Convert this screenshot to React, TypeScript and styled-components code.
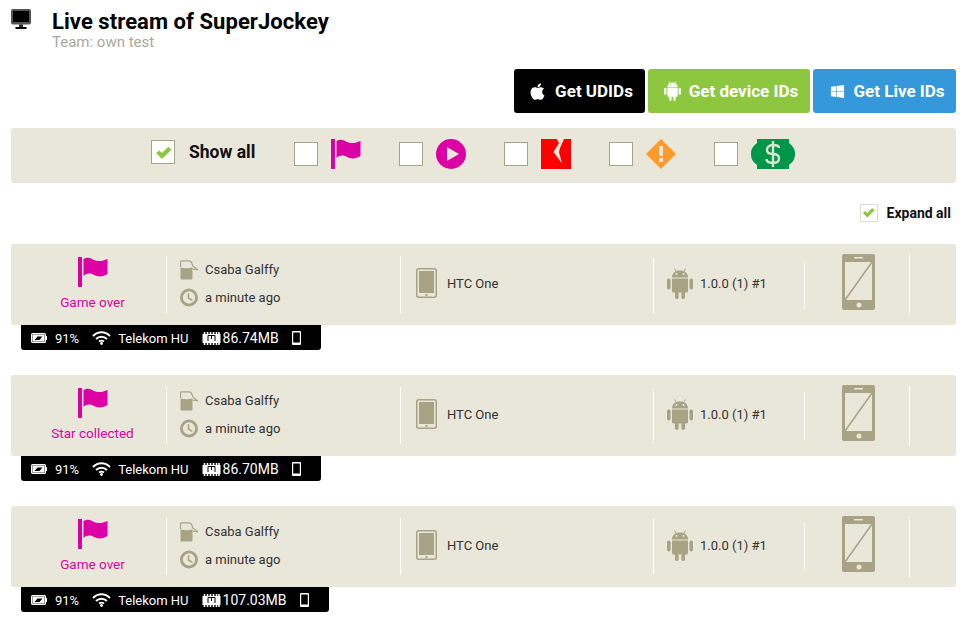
import React, { FunctionComponent } from 'react';
import styled, { createGlobalStyle } from 'styled-components';
import { FaApple, FaWindows } from 'react-icons/fa';

const TAN = '#a9a385';
const SAND = '#e9e6da';
const PINK = '#dc00a4';

const GlobalStyle = createGlobalStyle`
  html, body {
    margin: 0;
    background: #fff;
    font-family: Roboto, "Open Sans", sans-serif;
  }
`;

const Page = styled.div`
  width: 965px;
  height: 626px;
  padding: 0 9px 0 11px;
  box-sizing: border-box;
  overflow: hidden;
`;

const Header = styled.header`
  display: flex;
  height: 69px;
`;

const HeaderIcon = styled.div`
  width: 41px;
  padding-top: 9px;
`;

const Title = styled.h1`
  margin: 9px 0 0;
  font-size: 22px;
  line-height: 25px;
  font-weight: 700;
  letter-spacing: 0.06px;
  color: #000;
`;

const Subtitle = styled.div`
  font-size: 15px;
  line-height: 17px;
  color: #aaa89f;
`;

const ButtonRow = styled.div`
  display: flex;
  justify-content: flex-end;
  gap: 3px;
  height: 44px;
  margin-bottom: 15px;
`;

const GetButton = styled.button<{ $bg: string; $width: number; $pad: number }>`
  display: flex;
  align-items: center;
  justify-content: center;
  gap: 8px;
  width: ${props => props.$width}px;
  padding: 0 0 0 ${props => props.$pad}px;
  border: 0;
  border-radius: 3px;
  background: ${props => props.$bg};
  color: #fff;
  font-family: inherit;
  font-size: 17px;
  font-weight: 700;
`;

const FilterBar = styled.div`
  display: flex;
  align-items: center;
  height: 55px;
  padding-left: 140px;
  border-radius: 3px;
  background: ${SAND};
`;

const ShowAll = styled.label`
  display: flex;
  align-items: center;
  gap: 14px;
  width: 143px;
  margin-top: -7px;
  font-size: 17.5px;
  font-weight: 700;
  color: #111;
`;

const FilterItem = styled.div`
  display: flex;
  align-items: center;
  gap: 13px;
  width: 105px;
  margin-top: -3px;
`;

const CheckBox = styled.span<{ $size?: number; $border?: string }>`
  display: flex;
  align-items: center;
  justify-content: center;
  flex: none;
  width: ${props => props.$size || 24}px;
  height: ${props => props.$size || 24}px;
  box-sizing: border-box;
  border: 1px solid ${props => props.$border || TAN};
  background: #fff;
`;

const ExpandRow = styled.label`
  display: flex;
  align-items: center;
  justify-content: flex-end;
  gap: 9px;
  height: 18px;
  margin: 20px 5px 23px 0;
  padding-top: 1px;
  box-sizing: border-box;
  font-size: 14px;
  font-weight: 700;
  color: #111;
`;

const Entry = styled.section`
  margin-bottom: 25px;
`;

const Card = styled.div`
  display: flex;
  align-items: center;
  height: 81px;
  border-radius: 3px;
  background: ${SAND};
`;

const Cell = styled.div<{ $width: number; $height: number }>`
  display: flex;
  align-items: center;
  flex: none;
  width: ${props => props.$width}px;
  height: ${props => props.$height}px;
  box-sizing: border-box;
  border-right: 1px solid #fff;
`;

const EventCell = styled(Cell)`
  flex-direction: column;
  justify-content: center;
  gap: 7px;
  padding: 0 0 2px 8px;
  color: ${PINK};
  font-size: 13.5px;
  line-height: 16px;
`;

const UserCell = styled(Cell)`
  flex-direction: column;
  align-items: flex-start;
  justify-content: center;
  gap: 8px;
  padding: 0 0 2px 13px;
`;

const UserLine = styled.div`
  display: flex;
  align-items: center;
  gap: 7px;
  height: 20px;
`;

const UserIcon = styled.span`
  display: flex;
  width: 18px;
`;

const InfoCell = styled(Cell)<{ $pad: number; $gap: number }>`
  padding: 0 0 3px ${props => props.$pad}px;
  gap: ${props => props.$gap}px;
`;

const PhoneCell = styled(Cell)`
  justify-content: center;
  padding: 0 0 6px 2px;
`;

const Label = styled.span`
  font-size: 13px;
  color: #333;
`;

const StatusBar = styled.div`
  display: inline-flex;
  align-items: center;
  height: 25px;
  margin-left: 10px;
  padding: 1px 20px 0 10px;
  box-sizing: border-box;
  border-radius: 0 0 3px 3px;
  background: #000;
  color: #fff;
  font-size: 13px;
`;

const StatusText = styled.span<{ $left: number }>`
  margin-left: ${props => props.$left}px;
`;

const MemoryText = styled(StatusText)`
  font-size: 14px;
`;

const StatusGap = styled.span<{ $left: number }>`
  display: flex;
  margin-left: ${props => props.$left}px;
`;

const MonitorIcon = () => (
  <svg width="20" height="20" viewBox="0 0 20 20">
    <rect x="0" y="0" width="20" height="15.5" rx="2" fill="#555" />
    <rect x="2" y="2" width="16" height="11" fill="#000" />
    <rect x="8" y="15.5" width="4" height="2.5" fill="#222" />
    <rect x="4.5" y="18" width="11" height="2" fill="#000" />
  </svg>
);

const CheckMark: FunctionComponent<{ size: number }> = ({ size }) => (
  <svg width={size} height={size} viewBox="0 0 16 16">
    <path d="M1 8.5 L4 6 L6.5 8.5 L12.5 2.5 L15.5 5.5 L6.5 14 Z" fill="#8dc63f" />
  </svg>
);

const FlagIcon = () => (
  <svg width="30" height="30" viewBox="0 0 30 30">
    <rect x="0" y="0" width="4" height="30" fill={PINK} />
    <path d="M5.5 2 C10 -0.5 13 1 16 3 C20 5 25 4 29.5 2 V17 C25 20 20 20 16 18 C12 16 9 16 5.5 19 Z" fill={PINK} />
  </svg>
);

const PlayIcon = () => (
  <svg width="30" height="30" viewBox="0 0 30 30">
    <circle cx="15" cy="15" r="15" fill={PINK} />
    <path d="M11 8 L23 15 L11 22 Z" fill={SAND} />
  </svg>
);

const CrashIcon = () => (
  <svg width="30" height="30" viewBox="0 0 30 30">
    <rect width="30" height="30" fill="#ff0000" />
    <path d="M15.5 0 H23 L19 9 L18 13 L21 24.5 L12.5 13 L18 4 Z" fill={SAND} />
  </svg>
);

const WarningIcon = () => (
  <svg width="30" height="30" viewBox="0 0 30 30">
    <path d="M15 0 L30 15 L15 30 L0 15 Z" fill="#ff9a2b" />
    <rect x="13" y="7" width="4" height="10" fill={SAND} />
    <rect x="13" y="19" width="4" height="4" fill={SAND} />
  </svg>
);

const DollarIcon = () => (
  <svg width="44" height="30" viewBox="0 0 44 30">
    <path d="M6 0 H38 V4 C40 6 44 8 44 15 C44 22 40 24 38 26 V30 H6 V26 C4 24 0 22 0 15 C0 8 4 6 6 4 Z" fill="#00964a" />
    <path d="M28 9 C28 7 26 6 22 6 C18 6 16 8 16 11 C16 14 18 15 22 15 C26 15 28 16 28 19.5 C28 22 26 24 22 24 C18 24 15.5 23 15.5 20 M22 2 V28" fill="none" stroke="#d9e6d0" strokeWidth="2.4" />
  </svg>
);

const AndroidIcon: FunctionComponent<{ width?: number; height?: number; color?: string; eyes?: string }> = ({
  width = 26,
  height = 31,
  color = TAN,
  eyes = SAND
}) => (
  <svg width={width} height={height} viewBox="0 0 26 31">
    <path d="M5 9.5 C5 5 8.5 2.5 13 2.5 C17.5 2.5 21 5 21 9.5 Z" fill={color} />
    <path d="M7.5 0.5 L9.5 4 M18.5 0.5 L16.5 4" stroke={color} strokeWidth="1" />
    <circle cx="9.5" cy="6" r="1" fill={eyes} />
    <circle cx="16.5" cy="6" r="1" fill={eyes} />
    <path d="M5 10.5 H21 V23 C21 24 20 24.5 19 24.5 H7 C6 24.5 5 24 5 23 Z" fill={color} />
    <rect x="0" y="10.5" width="3.6" height="11" rx="1.8" fill={color} />
    <rect x="22.4" y="10.5" width="3.6" height="11" rx="1.8" fill={color} />
    <rect x="8" y="22" width="3.6" height="9" rx="1.8" fill={color} />
    <rect x="14.4" y="22" width="3.6" height="9" rx="1.8" fill={color} />
  </svg>
);

const CupIcon = () => (
  <svg width="18" height="20" viewBox="0 0 18 20">
    <path d="M0.5 7.5 C4 8.5 9 8.5 12.5 7.5 V18 C12.5 19 12 19.5 11 19.5 H2 C1 19.5 0.5 19 0.5 18 Z" fill={TAN} />
    <path d="M0.5 7 V2 C0.5 1.2 1 0.8 2 0.8 H9 C10.5 0.8 11.5 2 12 3.5 L12.8 6 L18 10 L12.5 9" fill="none" stroke={TAN} strokeWidth="1.2" />
  </svg>
);

const ClockIcon = () => (
  <svg width="19" height="19" viewBox="0 0 19 19">
    <circle cx="9.5" cy="9.5" r="8" fill="none" stroke={TAN} strokeWidth="3" />
    <path d="M9 5 V10 L13 12.5" fill="none" stroke={TAN} strokeWidth="1.6" />
  </svg>
);

const TabletIcon = () => (
  <svg width="21" height="30" viewBox="0 0 21 30">
    <rect x="0.75" y="0.75" width="19.5" height="28.5" rx="2" fill="none" stroke={TAN} strokeWidth="1.5" />
    <rect x="3" y="3" width="15" height="22" fill={TAN} />
    <rect x="9.5" y="26" width="2" height="2" fill={TAN} />
  </svg>
);

const PhoneIcon = () => (
  <svg width="33" height="56" viewBox="0 0 33 56">
    <rect width="33" height="56" rx="2" fill={TAN} />
    <rect x="3" y="8" width="27" height="38" fill={SAND} />
    <path d="M3 46 L30 8" stroke={TAN} strokeWidth="1.5" />
    <rect x="12" y="3" width="9" height="1.5" fill={SAND} />
    <circle cx="17" cy="51" r="2.5" fill={SAND} />
  </svg>
);

const BatteryIcon = () => (
  <svg width="16" height="10" viewBox="0 0 16 10">
    <rect x="0.6" y="0.6" width="13.8" height="8.8" rx="1" fill="#000" stroke="#fff" strokeWidth="1.2" />
    <rect x="1.5" y="1.5" width="12" height="7" fill="#fff" />
    <rect x="15" y="3" width="1" height="4" fill="#fff" />
    <path d="M3.5 7 L6.5 3.5 H11.5 L8.5 7 Z" fill="#000" />
  </svg>
);

const WifiIcon = () => (
  <svg width="19" height="14" viewBox="0 0 19 14">
    <path d="M1 5 C6 0 13 0 18 5 M4 8 C7 5 12 5 15 8 M7 10.5 C8.5 9.5 10.5 9.5 12 10.5" fill="none" stroke="#fff" strokeWidth="1.8" />
    <circle cx="9.5" cy="12.5" r="1.4" fill="#fff" />
  </svg>
);

const ChipIcon = () => (
  <svg width="19" height="13" viewBox="0 0 19 13">
    <rect x="0.5" y="2" width="18" height="9" fill="#fff" />
    <path d="M2.5 0 V13 M5.5 0 V13 M8.5 0 V13 M11.5 0 V13 M14.5 0 V13 M17 0 V13" stroke="#fff" strokeDasharray="2 9" strokeWidth="1.6" />
    <path d="M6 9 V3.5 H13 V9 M9.5 3.5 V7" fill="none" stroke="#000" strokeWidth="1" />
  </svg>
);

const SmallPhoneIcon = () => (
  <svg width="9" height="14" viewBox="0 0 9 14">
    <rect width="9" height="14" rx="1" fill="#fff" />
    <rect x="1.2" y="1.5" width="6.6" height="10" fill="#000" />
  </svg>
);

const streamEntries = [
  { event: 'Game over', memory: '86.74MB' },
  { event: 'Star collected', memory: '86.70MB' },
  { event: 'Game over', memory: '107.03MB' }
];

const filters = [
  { name: 'flag', Icon: FlagIcon },
  { name: 'play', Icon: PlayIcon },
  { name: 'crash', Icon: CrashIcon },
  { name: 'warning', Icon: WarningIcon },
  { name: 'purchase', Icon: DollarIcon }
];

const App: FunctionComponent = () => {
  return (
    <Page>
      <GlobalStyle />
      <Header>
        <HeaderIcon><MonitorIcon /></HeaderIcon>
        <div>
          <Title>Live stream of SuperJockey</Title>
          <Subtitle>Team: own test</Subtitle>
        </div>
      </Header>
      <ButtonRow>
        <GetButton $bg="#000" $width={131} $pad={2}><FaApple size={19} />Get UDIDs</GetButton>
        <GetButton $bg="#8dc63f" $width={162} $pad={4}>
          <AndroidIcon width={17} height={20} color="#fff" eyes="#8dc63f" />Get device IDs
        </GetButton>
        <GetButton $bg="#3498db" $width={143} $pad={6}><FaWindows size={15} />Get Live IDs</GetButton>
      </ButtonRow>
      <FilterBar>
        <ShowAll>
          <CheckBox><CheckMark size={17} /></CheckBox>
          Show all
        </ShowAll>
        {filters.map(({ name, Icon }) => (
          <FilterItem key={name}>
            <CheckBox />
            <Icon />
          </FilterItem>
        ))}
      </FilterBar>
      <ExpandRow>
        <CheckBox $size={18} $border="#e0ddcf"><CheckMark size={13} /></CheckBox>
        Expand all
      </ExpandRow>
      {streamEntries.map(({ event, memory }, index) => (
        <Entry key={index}>
          <Card>
            <EventCell $width={156} $height={57}>
              <FlagIcon />
              {event}
            </EventCell>
            <UserCell $width={234} $height={57}>
              <UserLine><UserIcon><CupIcon /></UserIcon><Label>Csaba Galffy</Label></UserLine>
              <UserLine><UserIcon><ClockIcon /></UserIcon><Label>a minute ago</Label></UserLine>
            </UserCell>
            <InfoCell $width={253} $height={56} $pad={15} $gap={10}>
              <TabletIcon /><Label>HTC One</Label>
            </InfoCell>
            <InfoCell $width={151} $height={48} $pad={13} $gap={7}>
              <AndroidIcon /><Label>1.0.0 (1) #1</Label>
            </InfoCell>
            <PhoneCell $width={105} $height={61}>
              <PhoneIcon />
            </PhoneCell>
          </Card>
          <StatusBar>
            <BatteryIcon />
            <StatusText $left={8}>91%</StatusText>
            <StatusGap $left={13}><WifiIcon /></StatusGap>
            <StatusText $left={7}>Telekom HU</StatusText>
            <StatusGap $left={13}><ChipIcon /></StatusGap>
            <MemoryText $left={2}>{memory}</MemoryText>
            <StatusGap $left={13}><SmallPhoneIcon /></StatusGap>
          </StatusBar>
        </Entry>
      ))}
    </Page>
  );
};

export default App;
